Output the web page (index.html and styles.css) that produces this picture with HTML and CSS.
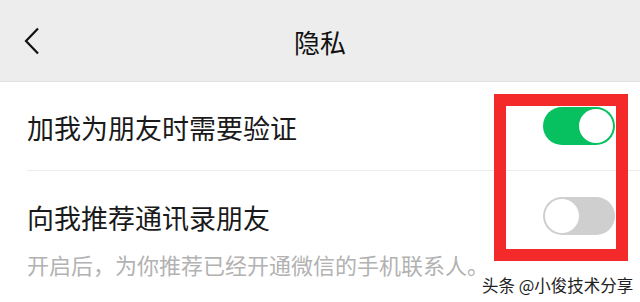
FILE: index.html
```html
<!DOCTYPE html>
<html lang="zh">
<head>
<meta charset="utf-8">
<link rel="stylesheet" href="styles.css">
</head>
<body>
<div class="page">
  <header class="header">
    <div class="back">
      <svg width="18" height="28" viewBox="0 0 18 28"><path d="M15 1.5 L3 14 L15 26.5" fill="none" stroke="#111" stroke-width="2.2" stroke-linejoin="miter"/></svg>
    </div>
    <div class="title">隐私</div>
    <div></div>
  </header>
  <div class="list">
    <div class="row row-first">
      <span class="label">加我为朋友时需要验证</span>
      <span class="switch on"><span class="knob"></span></span>
    </div>
    <div class="row row-second">
      <div class="line">
        <span class="label">向我推荐通讯录朋友</span>
        <span class="switch off"><span class="knob"></span></span>
      </div>
      <div class="desc">开启后，为你推荐已经开通微信的手机联系人。</div>
    </div>
  </div>
  <div class="highlight"></div>
  <div class="watermark">头条 @小俊技术分享</div>
</div>
</body>
</html>
```

FILE: styles.css
```css
html, body {
  margin: 0;
  padding: 0;
  background: #ffffff;
}
body {
  font-family: "Noto Sans CJK SC", "Noto Sans", sans-serif;
  color: #1a1a1a;
}
.page {
  position: relative;
  width: 640px;
  height: 302px;
  overflow: hidden;
  background: #ffffff;
}
.header {
  height: 81px;
  background: #ededed;
  border-bottom: 1px solid #e2e2e2;
  display: grid;
  grid-template-columns: 1fr auto 1fr;
  align-items: center;
}
.back {
  padding-left: 23px;
  padding-top: 1px;
  display: flex;
  align-items: center;
}
.title {
  font-size: 26px;
  color: #111;
  line-height: 30px;
  padding-top: 2px;
}
.list {
  margin-left: 27px;
}
.row {
  padding-right: 25px;
}
.row-first {
  height: 88px;
  display: flex;
  align-items: center;
  justify-content: space-between;
  border-bottom: 1px solid #ececec;
}
.row-first .label {
  padding-top: 4px;
}
.row-second {
  padding-top: 26px;
}
.line {
  display: flex;
  align-items: center;
  justify-content: space-between;
  height: 38px;
}
.line .label {
  padding-top: 4px;
}
.label {
  font-size: 27px;
  line-height: 38px;
  color: #1a1a1a;
}
.desc {
  margin-top: 14px;
  font-size: 22px;
  line-height: 30px;
  color: #b2b2b2;
}
.switch {
  position: relative;
  width: 72px;
  height: 38px;
  border-radius: 19px;
  box-sizing: border-box;
  flex: none;
}
.switch.on {
  background: #07c160;
}
.switch.off {
  background: #cfcfcf;
}
.knob {
  position: absolute;
  top: 2px;
  width: 34px;
  height: 34px;
  border-radius: 50%;
  background: #ffffff;
}
.switch.on .knob {
  right: 2px;
}
.switch.off .knob {
  left: 2px;
}
.highlight {
  position: absolute;
  left: 494px;
  top: 94px;
  width: 134px;
  height: 167px;
  box-sizing: border-box;
  border: 12px solid #f42a2a;
}
.watermark {
  position: absolute;
  left: 482px;
  top: 274px;
  font-size: 16.5px;
  line-height: 22px;
  color: #222;
  text-shadow: 0 0 2px #fff, 0 0 2px #fff;
  white-space: nowrap;
}
```
